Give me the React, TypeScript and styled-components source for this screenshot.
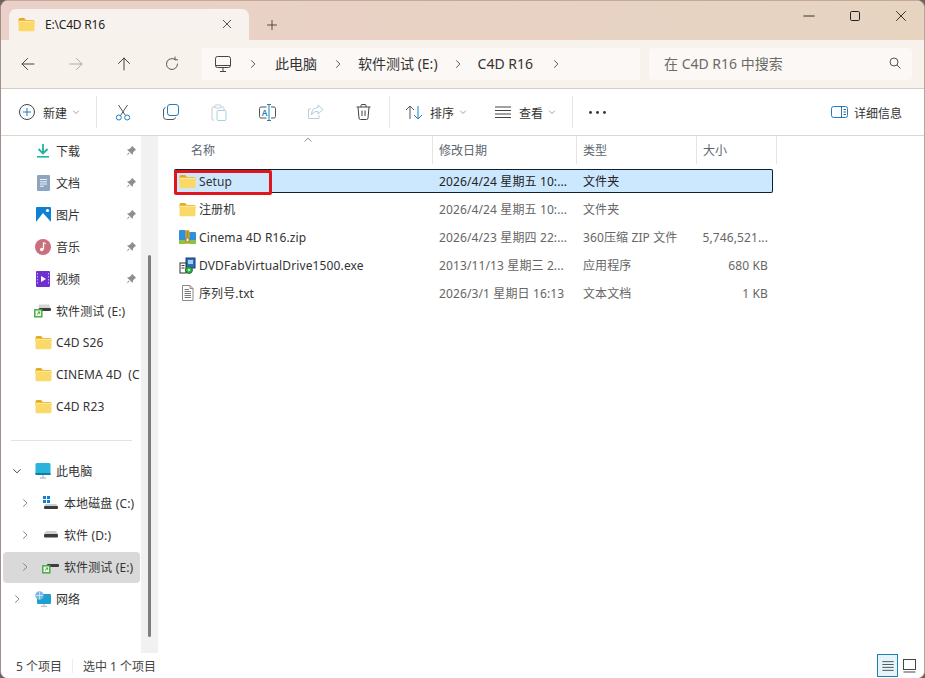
import React from "react";
import styled, { createGlobalStyle } from "styled-components";

const FONT = `"Noto Sans", "Noto Sans CJK SC", "Liberation Sans", sans-serif`;

const Global = createGlobalStyle`
  html, body { margin: 0; padding: 0; background: #6f615b; }
  body { width: 925px; height: 678px; overflow: hidden; font-family: ${FONT}; }
  * { box-sizing: border-box; }
  svg { display: block; flex: none; }
`;

const Win = styled.div`
  width: 925px; height: 678px; display: flex; flex-direction: column; overflow: hidden;
  border-radius: 8px 8px 7px 7px; background: #fff;
  border-left: 1px solid #a08f8a; border-right: 1px solid #b4a79c; border-top: 1px solid #c4a898;
`;
const TabBar = styled.div`
  height: 39px; flex: none; display: flex; align-items: flex-start; padding: 8px 0 0 8px;
  background: linear-gradient(90deg, #ead0c8 0%, #e8d2c4 45%, #e6d4c1 100%);
`;
const Tab = styled.div`
  width: 240px; height: 31px; display: flex; align-items: center; padding: 0 0 0 9px;
  background: #f8f2ee; border-radius: 7px 7px 0 0; font-size: 12px; color: #222; letter-spacing: -.2px;
`;
const TabTitle = styled.span` margin-left: 10px; flex: 1; `;
const TabClose = styled.span` width: 44px; display: flex; justify-content: center; margin-top: -1px; `;
const NewTab = styled.div` width: 44px; margin-left: 1px; height: 31px; display: flex; align-items: center; justify-content: center; `;
const Spacer = styled.div` flex: 1; `;
const WinButton = styled.div` width: 46px; height: 30px; margin-top: -8px; display: flex; align-items: center; justify-content: center; `;
const NavRow = styled.div`
  height: 49px; flex: none; display: flex; align-items: flex-start; padding: 8px 12px 0 3px;
  background: #f8f2ed; border-bottom: 1px solid #d9cdc6;
`;
const NavButton = styled.div` width: 48px; height: 32px; display: flex; align-items: center; justify-content: center; `;
const Crumbs = styled.div`
  margin-left: 6px; width: 438px; height: 32px; display: flex; align-items: center;
  background: #fbf8f5; font-size: 14px; color: #333; padding-left: 13px;
`;
const CrumbText = styled.span` white-space: nowrap; padding-bottom: 2px; `;
const CrumbSep = styled.span<{ $w: number }>` width: ${(p) => p.$w}px; display: flex; justify-content: center; `;
const Search = styled.div`
  margin-left: 9px; width: 263px; height: 32px; display: flex; align-items: center; justify-content: space-between;
  background: #fbf8f5; padding: 0 11px 2px 15px; font-size: 14px; color: #6a6a6a; border-radius: 4px;
`;
const Toolbar = styled.div`
  height: 47px; flex: none; display: flex; align-items: center; background: #fff; border-bottom: 1px solid #dcd6d0;
  font-size: 12px; color: #333; padding-left: 7px;
`;
const ToolIcon = styled.div` width: 48px; height: 32px; display: flex; align-items: center; justify-content: center; `;
const ToolLabel = styled.div<{ $w: number }>` width: ${(p) => p.$w}px; height: 32px; display: flex; align-items: center; white-space: nowrap; `;
const LabelText = styled.span<{ $gap: number }>` margin-left: ${(p) => p.$gap}px; padding-top: 2px; `;
const Caret = styled.span<{ $gap: number }>` margin-left: ${(p) => p.$gap}px; `;
const ToolSep = styled.div<{ $m: number }>` width: 1px; height: 32px; background: #e8e6e4; margin: 0 ${(p) => p.$m}px 0 2px; `;
const Details = styled.div` margin-left: auto; margin-right: 22px; display: flex; align-items: center; gap: 6px; `;
const Body = styled.div` flex: 1; display: flex; min-height: 0; background: #fff; `;
const Side = styled.div` width: 139px; flex: none; padding-left: 2px; overflow: hidden; font-size: 12px; color: #333; `;
const SideRow = styled.div<{ $level?: number; $sel?: boolean }>`
  height: 31px; margin-bottom: 1px; padding-bottom: 2px; display: flex; align-items: center; border-radius: 4px; overflow: hidden;
  padding-left: ${(p) => 5 + (p.$level || 0) * 8}px; background: ${(p) => (p.$sel ? "#d9d9d9" : "transparent")};
`;
const ChevSlot = styled.div` width: 18px; margin-right: 8px; display: flex; justify-content: center; `;
const IconSlot = styled.div` width: 18px; margin-right: 4px; display: flex; justify-content: center; `;
const SideText = styled.div` flex: 1; white-space: pre; overflow: hidden; letter-spacing: .12px; `;
const PinSlot = styled.div` width: 14px; margin-right: 1px; flex: none; `;
const SideSep = styled.div` height: 32px; display: flex; align-items: center; padding: 0 8px 0 8px; &::after { content: ""; flex: 1; height: 1px; background: #e2e2e2; } `;
const Track = styled.div` width: 17px; flex: none; background: #f1f1f1; margin-left: 1px; padding: 119px 7px 16px; `;
const Thumb = styled.div` width: 3px; height: 382px; background: #7e7e7e; border-radius: 2px; `;
const Main = styled.div` flex: 1; min-width: 0; position: relative; `;
const Header = styled.div` height: 28px; display: grid; grid-template-columns: 261px 144px 120px 80px; margin-left: 14px; font-size: 12px; color: #5c6670; position: relative; `;
const HeadCell = styled.div<{ $pad: number }>` padding-left: ${(p) => p.$pad}px; padding-top: 5px; border-right: 1px solid #e5e5e5; `;
const SortMark = styled.div` position: absolute; left: 131px; top: -1px; `;
const List = styled.div` padding: 5px 0 0 16px; display: flex; flex-direction: column; gap: 4px; `;
const FileRow = styled.div<{ $sel?: boolean }>`
  position: relative; width: 599px; height: 24px; display: grid; grid-template-columns: 259px 144px 120px 76px; align-items: center;
  font-size: 12px; color: #666; border-radius: 2px; letter-spacing: .12px;
  ${(p) => (p.$sel ? "background: #cce8ff; box-shadow: inset 0 0 0 1px #10202c; color: #222;" : "")}
`;
const NameCell = styled.div` display: flex; align-items: center; padding-left: 5px; color: #333; gap: 3px; white-space: nowrap; `;
const Cell = styled.div` padding-left: 6px; white-space: nowrap; `;
const SizeCell = styled.div` text-align: right; padding-right: 5px; white-space: nowrap; `;
const RedMark = styled.div` position: absolute; left: 0; top: 1px; width: 98px; height: 25px; border: 3px solid #e2141c; border-radius: 2px; `;
const Status = styled.div` height: 25px; flex: none; display: flex; align-items: center; background: #fff; font-size: 12px; color: #444; padding-left: 15px; border-radius: 0 0 7px 7px; `;
const StatusGap = styled.span` width: 1px; height: 14px; background: #ececec; margin: 0 10px; `;
const ViewBtn = styled.div<{ $on?: boolean }>`
  width: 21px; height: 23px; display: flex; align-items: center; justify-content: center;
  ${(p) => (p.$on ? "background: #e5f3fb; border: 1px solid #1f7fae;" : "")}
`;
const ViewGroup = styled.div` margin-left: auto; margin-right: 4px; display: flex; gap: 1px; `;
const CircleWrap = styled.span` margin-left: 11px; `;

const Line = ({ d, c = "#333", s = 16, sw = 1 }: { d: string; c?: string; s?: number; sw?: number }) => (
  <svg width={s} height={s} viewBox="0 0 16 16" fill="none" stroke={c} strokeWidth={sw} strokeLinecap="round" strokeLinejoin="round"><path d={d} /></svg>
);
const Chev = ({ c = "#555", s = 12 }: { c?: string; s?: number }) => <Line s={s} c={c} d="M6 3.5L10.5 8L6 12.5" sw={1.2} />;
const ChevDown = () => <Line s={12} c="#444" d="M3.5 6L8 10.5L12.5 6" sw={1.3} />;
const Down = () => <Line s={8} c="#888" d="M3 6L8 11L13 6" sw={1.6} />;

const Folder = () => (
  <svg width="17" height="15" viewBox="0 0 17 15">
    <path d="M0.5 2.5Q0.5 1 2 1H6L8 3H15Q16.5 3 16.5 4.5V6H0.5Z" fill="#e7a91e" />
    <rect x="0.5" y="3.8" width="16" height="10.4" rx="1.2" fill="#fbd968" />
    <rect x="0.5" y="3.8" width="16" height="1.2" fill="#fde89a" />
  </svg>
);
const Pin = () => (
  <svg width="12" height="12" viewBox="0 0 12 12"><path d="M7 .8L11.2 5L9.8 5.6L8 7.6L7.6 10L2 4.4L4.4 4L6.4 2.2ZM3.8 7.4L1 11L4.6 8.2Z" fill="#8b8f92" /></svg>
);
const DriveE = () => (
  <svg width="18" height="15" viewBox="0 0 18 15">
    <path d="M5 1.5H15L16.5 6H4Z" fill="#d5d5d5" /><rect x="5" y="5" width="12" height="3" rx="1" fill="#3c3c3c" />
    <rect x=".8" y="6.8" width="7" height="7" fill="#f2fbf0" stroke="#3ca83c" strokeWidth="1.4" /><path d="M3 11.5L5.6 9M3.8 9H5.6V10.8" stroke="#3ca83c" fill="none" />
  </svg>
);
const SideIcons: Record<string, React.ReactNode> = {
  download: <svg width="14" height="15" viewBox="0 0 14 15"><path d="M7 1V10M2.5 6L7 10.5L11.5 6" fill="none" stroke="#20b59b" strokeWidth="1.8" /><rect x="1" y="13" width="12" height="1.6" fill="#20b59b" /></svg>,
  doc: <svg width="13" height="16" viewBox="0 0 13 16"><rect width="13" height="16" rx="1" fill="#8ea5c2" /><path d="M3 4.5H10M3 6.8H10M3 9H10M3 11.2H7" stroke="#f2f6fb" /></svg>,
  pic: <svg width="15" height="15" viewBox="0 0 15 15"><rect width="15" height="15" rx="1" fill="#0f7fd6" /><path d="M0 15L7 6L15 15Z" fill="#fff" /><circle cx="11.5" cy="3.5" r="1.6" fill="#fff" /></svg>,
  music: <svg width="16" height="16" viewBox="0 0 16 16"><circle cx="8" cy="8" r="8" fill="#c9707c" /><path d="M8.5 3.5V10" stroke="#fff" strokeWidth="1.3" /><circle cx="6.8" cy="10.5" r="1.8" fill="#fff" /><path d="M8.5 3.5L11 5" stroke="#fff" /></svg>,
  video: <svg width="14" height="16" viewBox="0 0 14 16"><rect width="14" height="16" rx="1" fill="#6f2fd1" /><path d="M5 5L10 8L5 11Z" fill="#fff" /><path d="M1.5 2V14M12.5 2V14" stroke="#c9a9ff" strokeDasharray="1.5 1.5" /></svg>,
  drive: <DriveE />,
  folder: <Folder />,
  pc: <svg width="16" height="16" viewBox="0 0 16 16"><rect x=".5" width="15" height="12" rx="1.5" fill="#28b4dc" /><rect x=".5" y="10" width="15" height="2" fill="#0f7f9f" /><path d="M8 12V14.5M5 15H11" stroke="#b7c4cc" strokeWidth="1.4" /></svg>,
  c: <svg width="18" height="15" viewBox="0 0 18 15"><path d="M1 1H4V4H1ZM5 1H8V4H5ZM1 5H4V8H1ZM5 5H8V8H5Z" fill="#1180d8" /><path d="M4 9H14L16 11H2Z" fill="#cfcfcf" /><rect x="2" y="11" width="14" height="3" rx="1" fill="#3c3c3c" /></svg>,
  d: <svg width="18" height="15" viewBox="0 0 18 15"><path d="M4 4H14L16 7H2Z" fill="#cfcfcf" /><rect x="2" y="7" width="14" height="3.4" rx="1" fill="#3c3c3c" /></svg>,
  net: <svg width="16" height="16" viewBox="0 0 16 16"><rect x="2" y="3" width="14" height="10" rx="1" fill="#1f9fd0" /><path d="M9 13V15M6 15.4H12" stroke="#b7c4cc" strokeWidth="1.2" /><circle cx="4.5" cy="4.5" r="4.2" fill="#78b8e8" /><path d="M1 4.5H8M4.5 .5V8.5" stroke="#d8efff" strokeWidth=".7" /></svg>,
};
const sideTop: [string, string, boolean][] = [
  ["download", "下载", true], ["doc", "文档", true], ["pic", "图片", true], ["music", "音乐", true], ["video", "视频", true],
  ["drive", "软件测试 (E:)", false], ["folder", "C4D S26", false], ["folder", "CINEMA 4D  (C:)", false], ["folder", "C4D R23", false],
];
const sideBottom: { i: string; t: string; level: number; chev: "r" | "d"; sel?: boolean }[] = [
  { i: "pc", t: "此电脑", level: 0, chev: "d" },
  { i: "c", t: "本地磁盘 (C:)", level: 1, chev: "r" },
  { i: "d", t: "软件 (D:)", level: 1, chev: "r" },
  { i: "drive", t: "软件测试 (E:)", level: 1, chev: "r", sel: true },
  { i: "net", t: "网络", level: 0, chev: "r" },
];

const Zip = () => (
  <svg width="17" height="16" viewBox="0 0 17 16">
    <path d="M0 2Q0 1 1 1H6L8 3H16Q17 3 17 4V12H0Z" fill="#2f8fd8" /><rect y="11" width="17" height="4" fill="#8cc24a" />
    <rect x="6.5" y="1" width="4" height="14" fill="#e8b93a" /><path d="M7.5 3H9.5M7.5 5H9.5M7.5 7H9.5" stroke="#7a5a10" /><rect x="7" y="9" width="3" height="4" fill="#fff3c0" stroke="#7a5a10" strokeWidth=".7" />
  </svg>
);
const Exe = () => (
  <svg width="17" height="17" viewBox="0 0 17 17">
    <rect x="7" y="1" width="9" height="10" fill="#2d6fc4" stroke="#1b3a66" /><rect x="9" y="3" width="5" height="4" fill="#9fd0f5" />
    <rect x="1" y="6" width="6" height="10" fill="#fff" stroke="#333" /><path d="M2.5 8.5H5.5M2.5 11H5.5" stroke="#333" /><circle cx="10" cy="13" r="3.4" fill="#2fb84c" stroke="#1a6a2c" /><circle cx="10" cy="13" r="1" fill="#fff" />
  </svg>
);
const Txt = () => (
  <svg width="17" height="16" viewBox="0 0 17 16" fill="none">
    <path d="M3.5 .5H11L14 3.5V15.5H3.5Z" fill="#fff" stroke="#8a8a8a" /><path d="M11 .5V3.5H14" stroke="#8a8a8a" /><path d="M5.5 4.5H10M5.5 6.5H12M5.5 8.5H12M5.5 10.5H12M5.5 12.5H12" stroke="#7a7a7a" />
  </svg>
);
const files = [
  { n: "Setup", d: "2026/4/24 星期五 10:...", t: "文件夹", s: "", i: <Folder />, sel: true },
  { n: "注册机", d: "2026/4/24 星期五 10:...", t: "文件夹", s: "", i: <Folder /> },
  { n: "Cinema 4D R16.zip", d: "2026/4/23 星期四 22:...", t: "360压缩 ZIP 文件", s: "5,746,521...", i: <Zip /> },
  { n: "DVDFabVirtualDrive1500.exe", d: "2013/11/13 星期三 2...", t: "应用程序", s: "680 KB", i: <Exe /> },
  { n: "序列号.txt", d: "2026/3/1 星期日 16:13", t: "文本文档", s: "1 KB", i: <Txt /> },
];
const B = "#1b7fc4";
const tools: React.ReactNode[] = [
  <svg key="cut" width="16" height="17" viewBox="0 0 16 17" fill="none"><path d="M3.5 1L10.5 11.5M12.5 1L5.5 11.5" stroke="#555" /><circle cx="3.8" cy="13.5" r="2.5" stroke={B} /><circle cx="12.2" cy="13.5" r="2.5" stroke={B} /></svg>,
  <svg key="copy" width="16" height="16" viewBox="0 0 16 16" fill="none"><rect x="4.5" y=".5" width="11" height="11" rx="2.5" stroke={B} /><path d="M2.5 3.5Q.5 4 .5 6V12.5Q.5 15.5 3.5 15.5H10Q12 15.5 12.5 13.5" stroke="#555" /></svg>,
  <svg key="paste" width="16" height="17" viewBox="0 0 16 17" fill="none"><path d="M10 3H12Q13 3 13 4V6M3 16H1.5Q1 16 1 15V4Q1 3 2 3H4" stroke="#c4ccd2" /><rect x="4" y="1" width="6" height="3" rx="1" stroke="#c4ccd2" /><rect x="6" y="6.5" width="9" height="10" rx="1" stroke="#a8cfe8" /></svg>,
  <svg key="ren" width="17" height="17" viewBox="0 0 17 17" fill="none"><path d="M7.5 3H2Q.5 3 .5 4.5V12.5Q.5 14 2 14H7.5M12 3H15Q16.5 3 16.5 4.5V12.5Q16.5 14 15 14H12" stroke="#555" /><path d="M8 .5H12M8 16.5H12M10 .5V16.5" stroke={B} /><text x="2.8" y="11.5" fontSize="8.5" fontFamily="Noto Sans" fontWeight="600" fill={B}>A</text></svg>,
  <svg key="share" width="17" height="16" viewBox="0 0 17 16" fill="none"><path d="M4 5H1.5V14.5H12V11" stroke="#c4ccd2" /><path d="M11 1L16 5.5L11 10V7.5Q6.5 7 4.5 11Q4.5 4 11 3.5Z" stroke="#a8cfe8" /></svg>,
  <svg key="del" width="15" height="16" viewBox="0 0 15 16" fill="none" stroke="#444"><path d="M.5 3H14.5M5 3V1.5Q5 .5 6 .5H9Q10 .5 10 1.5V3M2 3L3 14Q3 15.5 4.5 15.5H10.5Q12 15.5 12 14L13 3M6 6.5V12M9 6.5V12" /></svg>,
];

export default function App() {
  return (
    <>
      <Global />
      <Win>
        <TabBar>
          <Tab>
            <Folder />
            <TabTitle>E:\C4D R16</TabTitle>
            <TabClose><Line s={12} c="#333" d="M3 3L13 13M13 3L3 13" sw={1.1} /></TabClose>
          </Tab>
          <NewTab><Line s={12} c="#333" d="M8 2V14M2 8H14" sw={1.1} /></NewTab>
          <Spacer />
          <WinButton><Line s={12} c="#222" d="M1 8H15" sw={1.2} /></WinButton>
          <WinButton><svg width="10" height="10" viewBox="0 0 10 10"><rect x=".5" y=".5" width="9" height="9" rx="1.2" fill="none" stroke="#222" /></svg></WinButton>
          <WinButton><Line s={12} c="#222" d="M2 2L14 14M14 2L2 14" sw={1.2} /></WinButton>
        </TabBar>
        <NavRow>
          <NavButton><Line s={16} c="#444" d="M2 8H14M7.5 2.5L2 8L7.5 13.5" /></NavButton>
          <NavButton><Line s={16} c="#aaa" d="M2 8H14M8.5 2.5L14 8L8.5 13.5" /></NavButton>
          <NavButton><Line s={16} c="#444" d="M8 2V14M2.5 7.5L8 2L13.5 7.5" /></NavButton>
          <NavButton><Line s={16} c="#555" d="M13.5 8A5.5 5.5 0 1 1 11 3.4M11 1V3.8H13.6" /></NavButton>
          <Crumbs>
            <svg width="16" height="16" viewBox="0 0 16 16" fill="none" stroke="#444"><rect x=".5" y=".5" width="15" height="11" rx="2" /><path d="M.5 9.5H15.5M8 12V15M5 15.5H11" /></svg>
            <CrumbSep $w={44}><Chev c="#444" /></CrumbSep>
            <CrumbText>此电脑</CrumbText>
            <CrumbSep $w={41}><Chev c="#444" /></CrumbSep>
            <CrumbText>软件测试 (E:)</CrumbText>
            <CrumbSep $w={40}><Chev c="#444" /></CrumbSep>
            <CrumbText>C4D R16</CrumbText>
            <CrumbSep $w={46}><Chev c="#444" /></CrumbSep>
          </Crumbs>
          <Search>
            <span>在 C4D R16 中搜索</span>
            <svg width="12" height="12" viewBox="0 0 12 12" fill="none" stroke="#555"><circle cx="5" cy="5" r="4" /><path d="M8 8L11.5 11.5" /></svg>
          </Search>
        </NavRow>
        <Toolbar>
          <ToolLabel $w={86}>
            <CircleWrap>
              <svg width="16" height="16" viewBox="0 0 16 16" fill="none"><circle cx="8" cy="8" r="7.5" stroke="#444" /><path d="M8 4V12M4 8H12" stroke={B} /></svg>
            </CircleWrap>
            <LabelText $gap={8}>新建</LabelText>
            <Caret $gap={5}><Down /></Caret>
          </ToolLabel>
          <ToolSep $m={2} />
          {tools.map((t, i) => <ToolIcon key={i}>{t}</ToolIcon>)}
          <ToolSep $m={15} />
          <ToolLabel $w={90}>
            <svg width="19" height="15" viewBox="0 0 19 15" fill="none"><path d="M5 14V1M1 5L5 1L9 5" stroke="#555" /><path d="M13 1V14M9 10L13 14L17 10" stroke={B} /></svg>
            <LabelText $gap={6}>排序</LabelText>
            <Caret $gap={5}><Down /></Caret>
          </ToolLabel>
          <ToolLabel $w={75}>
            <Line s={16} c="#444" d="M0 3H16M0 6.5H16M0 10H16M0 13.5H16" />
            <LabelText $gap={8}>查看</LabelText>
            <Caret $gap={5}><Down /></Caret>
          </ToolLabel>
          <ToolSep $m={16} />
          <svg width="17" height="3" viewBox="0 0 17 3" fill="#333"><circle cx="1.5" cy="1.5" r="1.4" /><circle cx="8.5" cy="1.5" r="1.4" /><circle cx="15.5" cy="1.5" r="1.4" /></svg>
          <Details>
            <svg width="17" height="12" viewBox="0 0 17 12" fill="none"><rect x=".5" y=".5" width="16" height="11" rx="2" stroke={B} /><path d="M10.5 .5V11.5" stroke={B} /><path d="M12.5 3.5H15M12.5 6H15M12.5 8.5H15" stroke="#555" /></svg>
            <LabelText $gap={0}>详细信息</LabelText>
          </Details>
        </Toolbar>
        <Body>
          <Side>
            {sideTop.map(([i, t, pin], k) => (
              <SideRow key={k}>
                <ChevSlot />
                <IconSlot>{SideIcons[i]}</IconSlot>
                <SideText>{t}</SideText>
                {pin && <PinSlot><Pin /></PinSlot>}
              </SideRow>
            ))}
            <SideSep />
            {sideBottom.map((r, k) => (
              <SideRow key={k} $level={r.level} $sel={r.sel}>
                <ChevSlot>{r.chev === "d" ? <ChevDown /> : <Chev c="#777" />}</ChevSlot>
                <IconSlot>{SideIcons[r.i]}</IconSlot>
                <SideText>{r.t}</SideText>
              </SideRow>
            ))}
          </Side>
          <Track><Thumb /></Track>
          <Main>
            <Header>
              <HeadCell $pad={19}>名称</HeadCell>
              <HeadCell $pad={6}>修改日期</HeadCell>
              <HeadCell $pad={6}>类型</HeadCell>
              <HeadCell $pad={6}>大小</HeadCell>
              <SortMark><Line s={10} c="#777" d="M3 10L8 5L13 10" sw={1.4} /></SortMark>
            </Header>
            <List>
              {files.map((f) => (
                <FileRow key={f.n} $sel={f.sel}>
                  <NameCell>{f.i}<span>{f.n}</span></NameCell>
                  <Cell>{f.d}</Cell>
                  <Cell>{f.t}</Cell>
                  <SizeCell>{f.s}</SizeCell>
                  {f.sel && <RedMark />}
                </FileRow>
              ))}
            </List>
          </Main>
        </Body>
        <Status>
          <span>5 个项目</span>
          <StatusGap />
          <span>选中 1 个项目</span>
          <ViewGroup>
            <ViewBtn $on><Line s={14} c="#444" d="M2 3H14M2 6.3H14M2 9.6H14M2 13H14" /></ViewBtn>
            <ViewBtn><svg width="13" height="14" viewBox="0 0 13 14" fill="none" stroke="#444"><rect x=".5" y=".5" width="12" height="10" /><path d="M.5 13H12.5" /></svg></ViewBtn>
          </ViewGroup>
        </Status>
      </Win>
    </>
  );
}
